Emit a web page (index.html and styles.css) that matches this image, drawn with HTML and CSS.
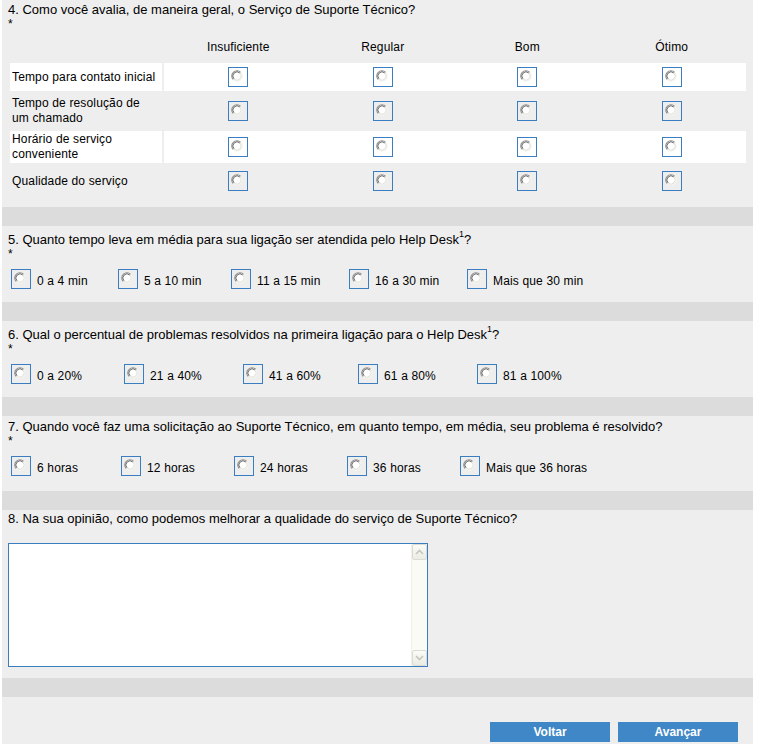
FILE: index.html
```html
<!DOCTYPE html>
<html lang="pt-BR">
<head>
<meta charset="utf-8">
<title>Pesquisa de satisfação</title>
<link rel="stylesheet" href="styles.css">
</head>
<body>
<svg class="defs" width="0" height="0" aria-hidden="true">
  <symbol id="rb" viewBox="0 0 12 12">
    <circle cx="6" cy="6" r="5.2" fill="#fff"/>
    <path d="M2.3 9.7 A5.2 5.2 0 0 1 9.7 2.3" fill="none" stroke="#8c8c8c" stroke-width="1.1"/>
    <path d="M3.1 8.9 A4.1 4.1 0 0 1 8.9 3.1" fill="none" stroke="#5a5a5a" stroke-width="0.9"/>
    <path d="M9.7 2.3 A5.2 5.2 0 0 1 2.3 9.7" fill="none" stroke="#f2f2ec" stroke-width="1.1"/>
    <path d="M8.9 3.1 A4.1 4.1 0 0 1 3.1 8.9" fill="none" stroke="#dcdcd2" stroke-width="0.9"/>
  </symbol>
</svg>
<div class="page">
  <section class="q q4">
    <div class="qtitle">4. Como você avalia, de maneira geral, o Serviço de Suporte Técnico?</div>
    <div class="req">*</div>
    <div class="matrix">
      <div class="mrow mhead">
        <div class="mlabel"></div>
        <div class="mcells">
          <div class="mcell">Insuficiente</div>
          <div class="mcell">Regular</div>
          <div class="mcell">Bom</div>
          <div class="mcell">Ótimo</div>
        </div>
      </div>
      <div class="mrow light">
        <div class="mlabel">Tempo para contato inicial</div>
        <div class="mcells">
          <div class="mcell"><span class="radio"><svg><use href="#rb"/></svg></span></div>
          <div class="mcell"><span class="radio"><svg><use href="#rb"/></svg></span></div>
          <div class="mcell"><span class="radio"><svg><use href="#rb"/></svg></span></div>
          <div class="mcell"><span class="radio"><svg><use href="#rb"/></svg></span></div>
        </div>
      </div>
      <div class="mrow">
        <div class="mlabel">Tempo de resolução de um chamado</div>
        <div class="mcells">
          <div class="mcell"><span class="radio"><svg><use href="#rb"/></svg></span></div>
          <div class="mcell"><span class="radio"><svg><use href="#rb"/></svg></span></div>
          <div class="mcell"><span class="radio"><svg><use href="#rb"/></svg></span></div>
          <div class="mcell"><span class="radio"><svg><use href="#rb"/></svg></span></div>
        </div>
      </div>
      <div class="mrow light">
        <div class="mlabel">Horário de serviço conveniente</div>
        <div class="mcells">
          <div class="mcell"><span class="radio"><svg><use href="#rb"/></svg></span></div>
          <div class="mcell"><span class="radio"><svg><use href="#rb"/></svg></span></div>
          <div class="mcell"><span class="radio"><svg><use href="#rb"/></svg></span></div>
          <div class="mcell"><span class="radio"><svg><use href="#rb"/></svg></span></div>
        </div>
      </div>
      <div class="mrow">
        <div class="mlabel">Qualidade do serviço</div>
        <div class="mcells">
          <div class="mcell"><span class="radio"><svg><use href="#rb"/></svg></span></div>
          <div class="mcell"><span class="radio"><svg><use href="#rb"/></svg></span></div>
          <div class="mcell"><span class="radio"><svg><use href="#rb"/></svg></span></div>
          <div class="mcell"><span class="radio"><svg><use href="#rb"/></svg></span></div>
        </div>
      </div>
    </div>
  </section>
  <div class="band"></div>

  <section class="q q-note">
    <div class="qtitle">5. Quanto tempo leva em média para sua ligação ser atendida pelo Help Desk<sup>1</sup>?</div>
    <div class="req">*</div>
    <div class="opts opts-q5">
      <label class="opt"><span class="radio"><svg><use href="#rb"/></svg></span><span>0 a 4 min</span></label>
      <label class="opt"><span class="radio"><svg><use href="#rb"/></svg></span><span>5 a 10 min</span></label>
      <label class="opt"><span class="radio"><svg><use href="#rb"/></svg></span><span>11 a 15 min</span></label>
      <label class="opt"><span class="radio"><svg><use href="#rb"/></svg></span><span>16 a 30 min</span></label>
      <label class="opt"><span class="radio"><svg><use href="#rb"/></svg></span><span>Mais que 30 min</span></label>
    </div>
  </section>
  <div class="band"></div>

  <section class="q q-note">
    <div class="qtitle">6. Qual o percentual de problemas resolvidos na primeira ligação para o Help Desk<sup>1</sup>?</div>
    <div class="req">*</div>
    <div class="opts opts-q6">
      <label class="opt"><span class="radio"><svg><use href="#rb"/></svg></span><span>0 a 20%</span></label>
      <label class="opt"><span class="radio"><svg><use href="#rb"/></svg></span><span>21 a 40%</span></label>
      <label class="opt"><span class="radio"><svg><use href="#rb"/></svg></span><span>41 a 60%</span></label>
      <label class="opt"><span class="radio"><svg><use href="#rb"/></svg></span><span>61 a 80%</span></label>
      <label class="opt"><span class="radio"><svg><use href="#rb"/></svg></span><span>81 a 100%</span></label>
    </div>
  </section>
  <div class="band"></div>

  <section class="q">
    <div class="qtitle">7. Quando você faz uma solicitação ao Suporte Técnico, em quanto tempo, em média, seu problema é resolvido?</div>
    <div class="req">*</div>
    <div class="opts opts-q7">
      <label class="opt"><span class="radio"><svg><use href="#rb"/></svg></span><span>6 horas</span></label>
      <label class="opt"><span class="radio"><svg><use href="#rb"/></svg></span><span>12 horas</span></label>
      <label class="opt"><span class="radio"><svg><use href="#rb"/></svg></span><span>24 horas</span></label>
      <label class="opt"><span class="radio"><svg><use href="#rb"/></svg></span><span>36 horas</span></label>
      <label class="opt"><span class="radio"><svg><use href="#rb"/></svg></span><span>Mais que 36 horas</span></label>
    </div>
  </section>
  <div class="band"></div>

  <section class="q q8">
    <div class="qtitle">8. Na sua opinião, como podemos melhorar a qualidade do serviço de Suporte Técnico?</div>
    <div class="ta">
      <textarea aria-label="Resposta"></textarea>
      <div class="sb">
        <div class="sb-btn"><svg width="9" height="6" viewBox="0 0 9 6"><polyline points="1,5 4.5,1.5 8,5" fill="none" stroke="#c6c6be" stroke-width="1.6"/></svg></div>
        <div class="sb-btn"><svg width="9" height="6" viewBox="0 0 9 6"><polyline points="1,1 4.5,4.5 8,1" fill="none" stroke="#c6c6be" stroke-width="1.6"/></svg></div>
      </div>
    </div>
  </section>
  <div class="band"></div>

  <div class="actions">
    <button class="btn" type="button">Voltar</button>
    <button class="btn" type="button">Avançar</button>
  </div>
</div>
</body>
</html>
```

FILE: styles.css
```css
html, body {
  margin: 0;
  padding: 0;
  background: #ffffff;
}

.defs {
  position: absolute;
  width: 0;
  height: 0;
  overflow: hidden;
}

.page {
  width: 751px;
  min-height: 744px;
  margin-left: 2px;
  background: #eeeeee;
  font-family: "Liberation Sans", Arial, sans-serif;
  font-size: 12px;
  line-height: 15px;
  letter-spacing: 0.15px;
  color: #000000;
}

.q {
  padding: 3px 6px 15px;
}

.q-note {
  padding-bottom: 13px;
}

.q4 {
  padding: 2px 6px 8px;
}

.q8 {
  padding: 1px 6px 11px;
}

.qtitle {
  font-size: 13px;
  letter-spacing: 0;
}

.qtitle sup {
  font-size: 9px;
  line-height: 10px;
  vertical-align: 7px;
}

.band {
  height: 19px;
  background: #dcdcdc;
}

/* matrix question */
.matrix {
  display: grid;
  grid-template-rows: 23px 28px 40px 32px 36px;
  margin: 8px 1px 0 2px;
}

.mrow {
  display: grid;
  grid-template-columns: 152px 1fr;
  column-gap: 2px;
}

.mlabel {
  display: flex;
  align-items: center;
  padding: 0 2px;
}

.mcells {
  display: grid;
  grid-template-columns: repeat(4, 1fr);
  padding: 0 2px;
}

.mcell {
  display: flex;
  align-items: center;
  justify-content: center;
}

.mhead .mcell {
  align-items: flex-start;
}

.mrow.light .mlabel,
.mrow.light .mcells {
  background: #ffffff;
}

/* radio look-alike */
.radio {
  box-sizing: border-box;
  width: 20px;
  height: 20px;
  border: 1px solid #3b7dc1;
  flex: none;
  display: block;
  padding: 2px 0 0 2px;
}

.radio svg {
  display: block;
  width: 12px;
  height: 12px;
}

/* horizontal option lists */
.opts {
  display: grid;
  margin: 7px 0 0 3px;
}

.opts-q5 { grid-template-columns: 107px 113px 118px 118px auto; }
.opts-q6 { grid-template-columns: 113px 119px 115px 119px auto; }
.opts-q7 { grid-template-columns: 110px 113px 113px 113px auto; }

.opt {
  display: flex;
  align-items: flex-end;
  gap: 6px;
  white-space: nowrap;
}

/* textarea */
.ta {
  box-sizing: border-box;
  display: flex;
  width: 420px;
  height: 124px;
  margin: 17px 0 0 0;
  border: 1px solid #3b7dc1;
  background: #ffffff;
}

.ta textarea {
  flex: 1;
  border: 0;
  margin: 0;
  padding: 2px;
  resize: none;
  outline: none;
  background: transparent;
  font: inherit;
}

.sb {
  width: 16px;
  display: flex;
  flex-direction: column;
  justify-content: space-between;
  background: #fbfbf6;
  border-left: 1px solid #f1f1ea;
  box-sizing: border-box;
}

.sb-btn {
  box-sizing: border-box;
  height: 16px;
  border: 1px solid #dcdcd4;
  border-radius: 2px;
  background: linear-gradient(#fbfbf7, #ecece5);
  display: flex;
  align-items: center;
  justify-content: center;
}

.sb-btn svg {
  display: block;
}

/* buttons */
.actions {
  display: flex;
  justify-content: flex-end;
  gap: 8px;
  padding: 25px 15px 0;
}

.btn {
  width: 120px;
  height: 20px;
  border: 0;
  padding: 0;
  background: #3f87c6;
  color: #ffffff;
  font-family: "Liberation Sans", Arial, sans-serif;
  font-size: 12px;
  font-weight: bold;
  line-height: 20px;
}
```
